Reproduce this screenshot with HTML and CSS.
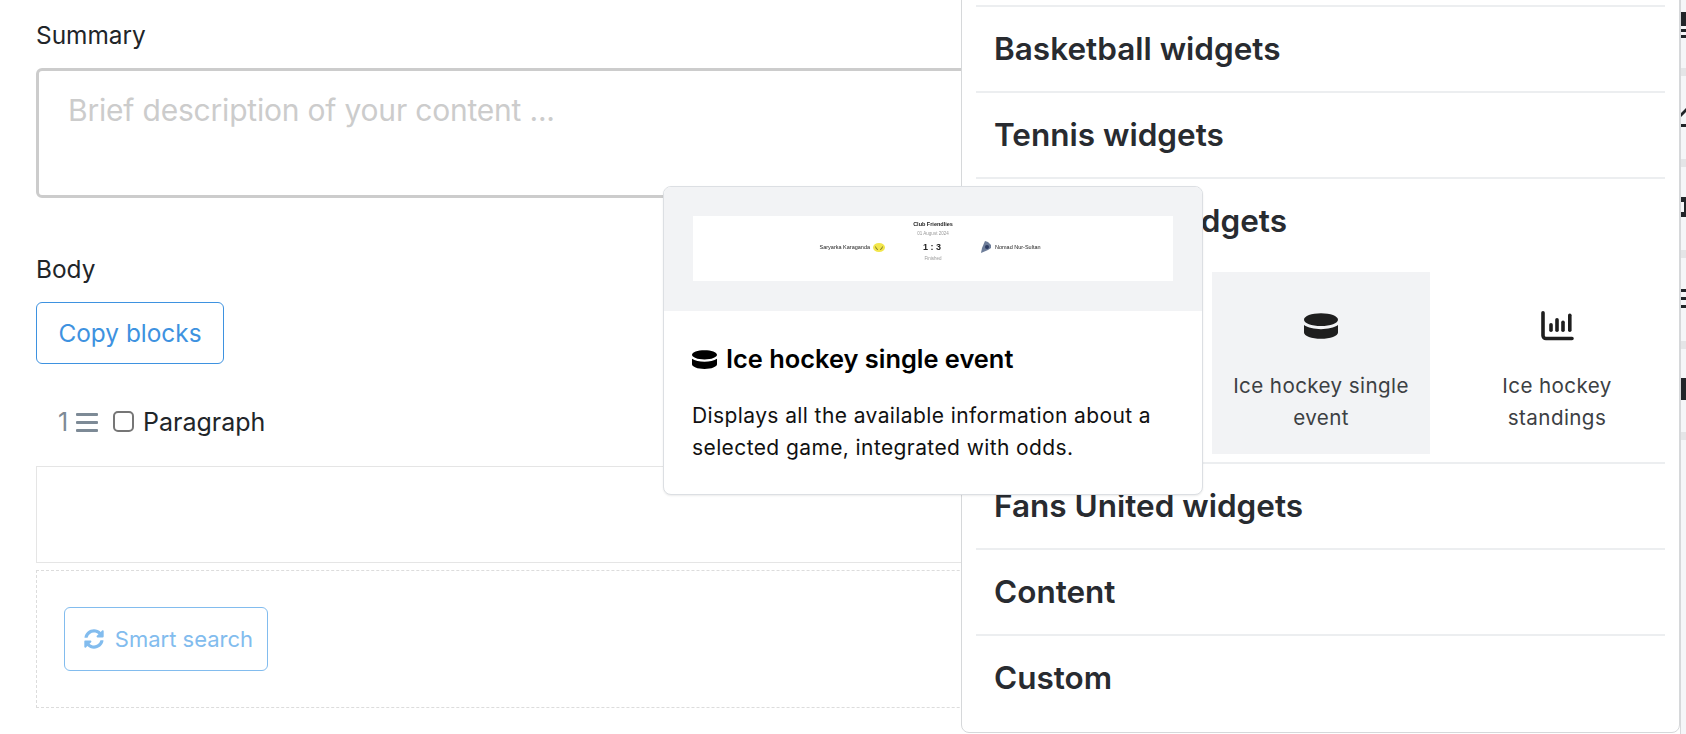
FILE: index.html
```html
<!DOCTYPE html>
<html lang="en">
<head>
<meta charset="utf-8">
<title>Widget picker</title>
<link rel="stylesheet" href="styles.css">
</head>
<body>
<div class="page">
  <main class="editor">
    <label class="field-label summary-label">Summary</label>
    <div class="summary-box">Brief description of your content ...</div>
    <label class="field-label body-label">Body</label>
    <button class="copy-btn">Copy blocks</button>
    <div class="block-row">
      <span class="block-num">1</span>
      <span class="drag"><i></i><i></i><i></i></span>
      <span class="check"></span>
      <span class="block-name">Paragraph</span>
    </div>
    <div class="block-body"></div>
    <div class="dropzone">
      <button class="smart-btn">
        <svg class="sync" viewBox="0 0 512 512"><path d="M370.72 133.28C339.458 104.008 298.888 87.962 255.848 88c-77.458.068-144.328 53.178-162.791 126.85-1.344 5.363-6.122 9.15-11.651 9.15H24.103c-7.498 0-13.194-6.807-11.807-14.176C33.933 94.924 134.813 8 256 8c66.448 0 126.791 26.136 171.315 68.685L463.03 40.97C478.149 25.851 504 36.559 504 57.941V192c0 13.255-10.745 24-24 24H345.941c-21.382 0-32.09-25.851-16.971-40.971l41.75-41.749zM32 296h134.059c21.382 0 32.09 25.851 16.971 40.971l-41.75 41.75c31.262 29.273 71.835 45.319 114.876 45.28 77.418-.07 144.315-53.144 162.787-126.849 1.344-5.363 6.122-9.15 11.651-9.15h57.304c7.498 0 13.194 6.807 11.807 14.176C478.067 417.076 377.187 504 256 504c-66.448 0-126.791-26.136-171.315-68.685L48.97 471.03C33.851 486.149 8 475.441 8 454.059V320c0-13.255 10.745-24 24-24z"/></svg>
        <span>Smart search</span>
      </button>
    </div>
  </main>

  <aside class="rail">
    <div class="rail-cell"><svg class="rail-ico" viewBox="0 0 24 26"><rect x="0" y="0" width="14" height="14"/><rect x="0" y="17" width="14" height="3"/><rect x="0" y="23" width="14" height="3"/></svg></div>
    <div class="rail-cell"><svg class="rail-ico" viewBox="0 0 24 26"><path d="M0 10 8 2v4L0 14zM0 21h12v3H0z"/></svg></div>
    <div class="rail-cell"><svg class="rail-ico" viewBox="0 0 24 26"><path d="M0 3h6v20H0v-5h3V8H0z"/></svg></div>
    <div class="rail-cell"><svg class="rail-ico" viewBox="0 0 24 26"><path d="M0 4h12v3H0zM0 12h8v3H0zM0 20h12v3H0z"/></svg></div>
    <div class="rail-cell"><svg class="rail-ico" viewBox="0 0 24 26"><rect x="0" y="2" width="6" height="22"/></svg></div>
  </aside>

  <aside class="inserter">
    <section class="group"><h3>Basketball widgets</h3></section>
    <section class="group"><h3>Tennis widgets</h3></section>
    <section class="group group-open">
      <h3>Ice hockey widgets</h3>
      <div class="tiles">
        <div class="tile tile-active">
          <svg class="tile-ico puck" viewBox="0 0 512 512"><path d="M0 160c0-53 114.6-96 256-96s256 43 256 96s-114.6 96-256 96S0 213 0 160zm0 82.2V352c0 53 114.6 96 256 96s256-43 256-96V242.2c-113.4 82.3-398.5 82.4-512 0z"/></svg>
          <span>Ice hockey single event</span>
        </div>
        <div class="tile">
          <svg class="tile-ico chart" viewBox="0 0 33 30"><path d="M2 1.800V24.500a3 3 0 0 0 3 3h26" fill="none" stroke="currentColor" stroke-width="3.600" stroke-linecap="round"/><rect x="8.200" y="12" width="3.600" height="9" rx="1.800"/><rect x="14.200" y="7" width="3.600" height="14" rx="1.800"/><rect x="20.200" y="9.500" width="3.600" height="11.500" rx="1.800"/><rect x="27" y="2.500" width="3.600" height="18.500" rx="1.800"/></svg>
          <span>Ice hockey standings</span>
        </div>
      </div>
    </section>
    <section class="group"><h3>Fans United widgets</h3></section>
    <section class="group"><h3>Content</h3></section>
    <section class="group"><h3>Custom</h3></section>
  </aside>

  <div class="popover">
    <div class="preview">
      <div class="preview-shot">
        <div class="shot-title">Club Friendlies</div>
        <div class="shot-date">01 August 2024</div>
        <div class="shot-row">
          <div class="shot-team shot-home">Saryarka Karaganda
            <svg class="logo" viewBox="0 0 12 9"><ellipse cx="6" cy="4.500" rx="6" ry="4.500" fill="#f2e64c"/><path d="M2.500 3.500l1 2.500 1.500.5M9.500 3.500l-1 2.500-1.500.5" fill="none" stroke="#6b6420" stroke-width=".8"/></svg>
          </div>
          <div class="shot-score">1 : 3</div>
          <div class="shot-team">
            <svg class="logo logo-away" viewBox="0 0 12 12"><path d="M5 0l3 1 3 3v3L8 9 1 12l1-5z" fill="#6d7d99"/><circle cx="7" cy="6" r="2" fill="#2c3c63"/></svg>
            Nomad Nur-Sultan
          </div>
        </div>
        <div class="shot-status">Finished</div>
      </div>
    </div>
    <div class="pop-body">
      <div class="pop-title">
        <svg class="pop-ico" viewBox="0 0 512 512"><path d="M0 160c0-53 114.6-96 256-96s256 43 256 96s-114.6 96-256 96S0 213 0 160zm0 82.2V352c0 53 114.6 96 256 96s256-43 256-96V242.2c-113.4 82.3-398.5 82.4-512 0z"/></svg>
        <span>Ice hockey single event</span>
      </div>
      <p class="pop-desc">Displays all the available information about a selected game, integrated with odds.</p>
    </div>
  </div>
</div>
</body>
</html>
```

FILE: styles.css
```css
* { box-sizing: border-box; }
html, body { margin: 0; height: 100%; }
body {
  background: #fff;
  color: #212529;
  font-family: Inter, "Liberation Sans", sans-serif;
  overflow: hidden;
}
.page {
  position: relative;
  width: 1686px;
  height: 734px;
  overflow: hidden;
}
.editor {
  padding: 19px 0 0 36px;
  width: 1400px;
}
.field-label {
  display: block;
  font-size: 24.400px;
  line-height: 32px;
}
.summary-box {
  margin-top: 17px;
  height: 130px;
  border: 3px solid #cccccc;
  border-radius: 6px;
  padding: 19px 29px;
  font-size: 30px;
  line-height: 40px;
  letter-spacing: -.2px;
  color: #cccccc;
}
.body-label { margin-top: 55px; }
.copy-btn {
  display: block;
  margin-top: 17px;
  width: 188px;
  height: 62px;
  background: #fff;
  border: 1px solid #3e92e0;
  border-radius: 6px;
  color: #3e92e0;
  font: 400 24.400px Inter, sans-serif;
  padding: 0;
}
.block-row {
  display: flex;
  align-items: center;
  height: 40px;
  margin-top: 38px;
  padding-left: 22px;
  font-size: 25px;
}
.block-num { color: #7d8a96; width: 18px; }
.drag {
  display: flex;
  flex-direction: column;
  justify-content: space-between;
  width: 22px;
  height: 19px;
}
.drag i { display: block; height: 3px; background: #7d8a96; border-radius: 1px; }
.check {
  width: 21px;
  height: 21px;
  margin-left: 15px;
  margin-top: -2px;
  border: 2px solid #767676;
  border-radius: 5px;
}
.block-name { margin-left: 9px; }
.block-body {
  margin-top: 24px;
  height: 97px;
  border: 1px solid #e5e5e5;
}
.dropzone {
  margin-top: 7px;
  height: 138px;
  border: 1px dashed #dcdcdc;
  padding: 36px 27px;
}
.smart-btn {
  display: flex;
  align-items: center;
  justify-content: center;
  gap: 11px;
  width: 204px;
  height: 64px;
  background: #fff;
  border: 1px solid #82bcee;
  border-radius: 6px;
  color: #82bcee;
  font: 400 22px Inter, sans-serif;
  padding: 0 0 0 5px;
}
.sync { width: 20px; height: 20px; fill: currentColor; }

.rail {
  position: absolute;
  top: 0;
  left: 1680px;
  width: 6px;
  height: 734px;
  background: #f5f6f8;
  border-left: 1px solid #d6d8da;
  display: flex;
  flex-direction: column;
  overflow: hidden;
}
.rail-cell {
  height: 91px;
  flex: none;
  padding-top: 12px;
  position: relative;
}
.rail-cell::after {
  content: "";
  position: absolute;
  left: 0;
  right: 0;
  top: 68px;
  height: 8px;
  background: #e4e5e7;
}
.rail-ico { display: block; width: 24px; height: 26px; fill: #212529; }

.inserter {
  position: absolute;
  left: 961px;
  right: 6px;
  top: -100px;
  bottom: 1px;
  background: #fff;
  border: 1px solid #d6d8da;
  border-radius: 8px;
  padding: 0 14px;
  display: flex;
  flex-direction: column;
  justify-content: flex-end;
}
.group {
  border-top: 2px solid #eceef0;
  height: 86px;
  flex: none;
  padding: 22px 18px 0;
}
.group:last-child { height: 98px; }
.group-open { height: 285px; }
.group h3 {
  margin: 0;
  font-size: 31.500px;
  line-height: 40px;
  font-weight: 600;
  color: #282b30;
}
.tiles {
  display: flex;
  justify-content: flex-end;
  gap: 18px;
  margin: 31px -19px 0 0;
}
.tile {
  width: 218px;
  height: 182px;
  display: flex;
  flex-direction: column;
  align-items: center;
  padding: 37px 12px 0;
  text-align: center;
  font-size: 20.600px;
  line-height: 32px;
  letter-spacing: .4px;
  color: #3c4043;
}
.tile-active { background: #f2f3f5; }
.tile-ico { fill: #1e1e1e; color: #1e1e1e; flex: none; }
.puck { width: 34px; height: 34px; margin-bottom: 27px; }
.chart { width: 33px; height: 30px; margin-top: 2px; margin-bottom: 29px; }

.popover {
  position: absolute;
  left: 663px;
  top: 186px;
  width: 540px;
  height: 309px;
  background: #fff;
  border: 1px solid #dcdfe3;
  border-radius: 8px;
  box-shadow: 0 1px 2px rgba(0,0,0,.08);
  overflow: hidden;
}
.preview {
  height: 124px;
  background: #f2f3f5;
  padding: 29px 29px 0;
}
.preview-shot {
  height: 65px;
  background: #fff;
  padding-top: 4px;
  text-align: center;
  color: #222;
  font-family: "Liberation Sans", sans-serif;
  filter: blur(.25px);
}
.shot-title { font-size: 5.500px; line-height: 8px; font-weight: 700; }
.shot-date { font-size: 4.500px; line-height: 8px; color: #999; margin-top: 2px; }
.shot-row {
  display: grid;
  grid-template-columns: 1fr 94px 1fr;
  align-items: center;
  margin-top: 2px;
  height: 14px;
  padding-right: 2px;
  font-size: 5.500px;
}
.shot-team { display: flex; align-items: center; gap: 3px; }
.shot-home { justify-content: flex-end; }
.shot-score { font-size: 9px; font-weight: 700; }
.logo { width: 12px; height: 9px; flex: none; }
.logo-away { height: 12px; margin-left: 1px; }
.shot-status { font-size: 4.500px; line-height: 8px; color: #999; margin-top: 1px; }
.pop-body { padding: 32px 28px 0; }
.pop-title {
  display: flex;
  align-items: center;
  gap: 9px;
  font-size: 25.400px;
  line-height: 32px;
  font-weight: 600;
  color: #000;
}
.pop-ico { width: 25px; height: 25px; fill: #000; }
.pop-desc {
  margin: 25px 0 0;
  font-size: 21px;
  line-height: 32px;
  letter-spacing: .4px;
  color: #111;
}
```
